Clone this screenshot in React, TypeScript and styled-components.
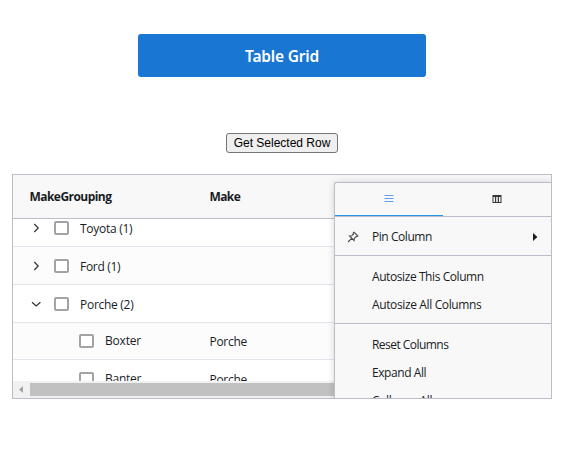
import React from "react";
import styled, { createGlobalStyle } from "styled-components";

const GlobalStyle = createGlobalStyle`
  * { box-sizing: border-box; }
  body {
    margin: 0;
    background: #fff;
    overflow: hidden;
    font-family: "Open Sans", "Noto Sans", sans-serif;
  }
`;

const Page = styled.main`
  width: 567px;
  height: 461px;
  display: flex;
  flex-direction: column;
  padding: 34px 15px 0 12px;
`;

const Banner = styled.h1`
  align-self: center;
  width: 288px;
  height: 43px;
  margin: 0;
  border-radius: 3px;
  background: #1976d2;
  color: #fff;
  display: flex;
  align-items: center;
  justify-content: center;
  font: 600 15.5px/24px "Noto Sans", sans-serif;
  letter-spacing: -0.2px;
  padding-top: 1px;
`;

const SelectButton = styled.button`
  align-self: center;
  width: 112px;
  height: 20px;
  margin: 56px 0 21px;
  padding: 0;
  border: 1px solid #767676;
  border-radius: 3px;
  background: #efefef;
  color: #000;
  font: 12px/16px "Liberation Sans", Arial, sans-serif;
  white-space: nowrap;
`;

const Grid = styled.section`
  position: relative;
  width: 540px;
  height: 225px;
  border: 1px solid #babfc7;
  overflow: hidden;
  color: #181d1f;
  font-size: 12px;
  display: flex;
  flex-direction: column;
`;

const Header = styled.div`
  flex: none;
  height: 44px;
  display: grid;
  grid-template-columns: 180px 180px 1fr;
  align-items: center;
  padding-left: 16.5px;
  background: #f8f8f8;
  border-bottom: 1px solid #babfc7;
  font-weight: 700;
`;

const Label = styled.span<{ $track?: number }>`
  letter-spacing: ${(p) => p.$track ?? 0}px;
  white-space: pre;
  line-height: 16px;
`;

const Viewport = styled.div`
  flex: 1;
  min-height: 0;
  overflow: hidden;
`;

const Rows = styled.div`
  margin-top: -10px;
`;

const Row = styled.div<{ $odd?: boolean; $height?: number }>`
  height: ${(p) => p.$height ?? 38}px;
  display: grid;
  grid-template-columns: 179.5px 1fr;
  align-items: center;
  padding-left: 17px;
  border-bottom: 1px solid #e2e5ec;
  background: ${(p) => (p.$odd ? "#fcfcfc" : "#fff")};
`;

const MakeCell = styled.div`
  display: flex;
  padding-top: 2px;
`;

const GroupCell = styled.div<{ $leaf?: boolean }>`
  display: flex;
  align-items: center;
  padding-left: ${(p) => (p.$leaf ? 49 : 0)}px;

  ${Label} {
    padding-top: ${(p) => (p.$leaf ? 0 : 2)}px;
  }
`;

const Arrow = styled.svg`
  width: 12px;
  height: 12px;
  margin-right: 12px;
  fill: none;
  stroke: #303238;
  stroke-width: 1.2;
`;

const CheckBox = styled.span`
  width: 15px;
  height: 14px;
  margin-right: 11px;
  border: 2px solid #a3a3a3;
  border-radius: 2px;
  background: #fff;
`;

const ScrollBar = styled.div`
  flex: none;
  height: 17px;
  display: flex;
  align-items: center;
  background: #f1f1f1;
`;

const ScrollArrow = styled.svg`
  width: 17px;
  height: 17px;
  fill: #a3a3a3;
`;

const Thumb = styled.div`
  width: 420px;
  height: 13px;
  background: #c1c1c1;
`;

const Menu = styled.div`
  position: absolute;
  left: 321px;
  top: 7px;
  width: 218px;
  height: 260px;
  border: 1px solid #babfc7;
  border-right: 0;
  border-radius: 3px 0 0 0;
  background: #f8f8f8;
  box-shadow: 0 0 7px rgba(0, 0, 0, 0.16);
`;

const Tabs = styled.div`
  height: 34px;
  display: grid;
  grid-template-columns: 108px 1fr;
  border-bottom: 1px solid #babfc7;
`;

const Tab = styled.div<{ $active?: boolean }>`
  display: flex;
  align-items: center;
  justify-content: center;
  padding-right: ${(p) => (p.$active ? 0 : 1)}px;
  border-bottom: 1px solid ${(p) => (p.$active ? "#2196f3" : "transparent")};
`;

const TabIcon = styled.svg`
  width: 12px;
  height: 12px;
`;

const MenuGroup = styled.div<{ $padding: string }>`
  padding: ${(p) => p.$padding};
  border-bottom: 1px solid #babfc7;
`;

const MenuItem = styled.div`
  height: 28px;
  display: grid;
  grid-template-columns: 37px 1fr 20px;
  align-items: center;
`;

const PinIcon = styled.svg`
  width: 12px;
  height: 12px;
  margin-left: 12px;
  fill: none;
  stroke: #45484c;
  stroke-width: 1.1;
`;

const SubArrow = styled.svg`
  width: 6px;
  height: 8px;
  fill: #181d1f;
`;

function Expander({ open }: { open?: boolean }) {
  return (
    <Arrow viewBox="0 0 12 12">
      <path d={open ? "M2 4.2 6.2 8 10.4 4.2" : "M4.3 2 8.2 6 4.3 10"} />
    </Arrow>
  );
}

const groups = [
  { name: "Toyota (1)", track: -0.28 },
  { name: "Ford (1)", track: -0.3, odd: true },
  { name: "Porche (2)", track: -0.28 , open: true },
];

const cars = [
  { model: "Boxter", make: "Porche", odd: true, height: 37, track: -0.2 },
  { model: "Banter", make: "Porche", height: 38, track: -0.25 },
];

const sizing = [
  { text: "Autosize This Column", track: -0.42 },
  { text: "Autosize All Columns", track: -0.37 },
];

const actions = [
  { text: "Reset Columns", track: -0.54 },
  { text: "Expand All", track: -0.43 },
  { text: "Collapse All", track: -0.33 },
];

export default function App() {
  return (
    <Page>
      <GlobalStyle />
      <Banner>Table Grid</Banner>
      <SelectButton>Get Selected Row</SelectButton>
      <Grid>
        <Header>
          <Label $track={-0.55}>MakeGrouping</Label>
          <Label $track={-0.6}>Make</Label>
        </Header>
        <Viewport>
          <Rows>
            {groups.map((g) => (
              <Row key={g.name} $odd={g.odd}>
                <GroupCell>
                  <Expander open={g.open} />
                  <CheckBox />
                  <Label $track={g.track}>{g.name}</Label>
                </GroupCell>
              </Row>
            ))}
            {cars.map((c) => (
              <Row key={c.model} $odd={c.odd} $height={c.height}>
                <GroupCell $leaf>
                  <CheckBox />
                  <Label $track={c.track}>{c.model}</Label>
                </GroupCell>
                <MakeCell>
                  <Label $track={-0.3}>{c.make}</Label>
                </MakeCell>
              </Row>
            ))}
          </Rows>
        </Viewport>
        <ScrollBar>
          <ScrollArrow viewBox="0 0 17 17">
            <path d="M10 5v7L6 8.5z" />
          </ScrollArrow>
          <Thumb />
        </ScrollBar>
        <Menu>
          <Tabs>
            <Tab $active>
              <TabIcon viewBox="0 0 12 12" fill="#5f9ff2">
                <path d="M1.5 2h9v1h-9zM1.5 5h9v1h-9zM1.5 8h9v1h-9z" />
              </TabIcon>
            </Tab>
            <Tab>
              <TabIcon viewBox="0 0 12 12" fill="#34383b">
                <path d="M1.5 2h9v8h-9zM2.5 4v5h1.5V4zM5.2 4v5h1.6V4zM8 4v5h1.5V4z" fillRule="evenodd" />
              </TabIcon>
            </Tab>
          </Tabs>
          <MenuGroup $padding="6px 0 4px">
            <MenuItem>
              <PinIcon viewBox="0 0 12 12">
                <path d="M7 1.2 10.8 5 9.8 5.7 9 5.5 7.2 7.4 7 9.5 2.5 5 4.7 4.8 6.5 3 6.2 2zM4.7 7.3 1 11" />
              </PinIcon>
              <Label $track={-0.45}>Pin Column</Label>
              <SubArrow viewBox="0 0 6 8">
                <path d="M1 0 5.4 4 1 8z" />
              </SubArrow>
            </MenuItem>
          </MenuGroup>
          <MenuGroup $padding="7px 0 4px">
            {sizing.map((s) => (
              <MenuItem key={s.text}>
                <span />
                <Label $track={s.track}>{s.text}</Label>
              </MenuItem>
            ))}
          </MenuGroup>
          <MenuGroup $padding="7px 0">
            {actions.map((s) => (
              <MenuItem key={s.text}>
                <span />
                <Label $track={s.track}>{s.text}</Label>
              </MenuItem>
            ))}
          </MenuGroup>
        </Menu>
      </Grid>
    </Page>
  );
}
